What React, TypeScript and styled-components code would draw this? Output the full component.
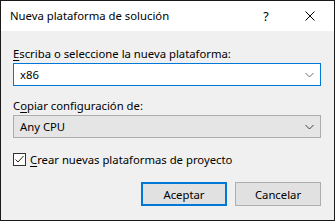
import styled, { createGlobalStyle } from 'styled-components'

const GlobalStyle = createGlobalStyle`
  html, body {
    margin: 0;
    padding: 0;
    background: #ffffff;
  }
  * {
    box-sizing: border-box;
  }
`

const Window = styled.div`
  width: 335px;
  height: 221px;
  border: 1px solid #1a1a1a;
  display: flex;
  flex-direction: column;
  font-family: 'Noto Sans', 'Open Sans', sans-serif;
  font-size: 11.3px;
  color: #000;
  background: #f0f0f0;
`

const TitleBar = styled.div`
  height: 30px;
  background: #ffffff;
  display: flex;
  align-items: center;
  padding-left: 9px;
  padding-right: 2px;
`

const Title = styled.div`
  flex: 1;
  line-height: 16px;
`

const TitleButton = styled.div`
  width: 44px;
  height: 30px;
  display: flex;
  align-items: center;
  justify-content: center;
  font-size: 12.5px;
`

const Body = styled.div`
  flex: 1;
  display: flex;
  flex-direction: column;
  padding: 15px 13px 0 12px;
`

const Label = styled.div<{ $gap?: number }>`
  line-height: 16px;
  height: 16px;
  margin-top: ${(p) => p.$gap ?? 0}px;
  margin-bottom: 1px;
`

const Key = styled.span`
  text-decoration: underline;
  text-underline-offset: 2px;
`

const Combo = styled.div<{ $focused?: boolean }>`
  height: 23px;
  display: flex;
  align-items: center;
  padding: 0 6px 0 6px;
  border: 1px solid ${(p) => (p.$focused ? '#0078d7' : '#adadad')};
  background: ${(p) => (p.$focused ? '#ffffff' : '#e5e5e5')};
`

const ComboText = styled.div`
  flex: 1;
  line-height: 16px;
`

const CheckRow = styled.div`
  margin-top: 13px;
  height: 16px;
  display: flex;
  align-items: center;
  gap: 4px;
`

const Box = styled.div`
  width: 13px;
  height: 13px;
  border: 1px solid #333333;
  background: #ffffff;
  display: flex;
  align-items: center;
  justify-content: center;
`

const Buttons = styled.div`
  margin-top: 15px;
  display: flex;
  justify-content: flex-end;
  gap: 8px;
`

const Button = styled.div<{ $primary?: boolean }>`
  width: 86px;
  height: 24px;
  display: flex;
  align-items: center;
  justify-content: center;
  background: #e1e1e1;
  border: ${(p) => (p.$primary ? '2px solid #0078d7' : '1px solid #adadad')};
`

const Chevron = ({ color }: { color: string }) => (
  <svg width="9" height="6" viewBox="0 0 9 6">
    <polyline points="0.5,1 4.5,5 8.5,1" fill="none" stroke={color} strokeWidth="1" />
  </svg>
)

export default function App() {
  return (
    <>
      <GlobalStyle />
      <Window>
        <TitleBar>
          <Title>Nueva plataforma de solución</Title>
          <TitleButton>?</TitleButton>
          <TitleButton>
            <svg width="10" height="10" viewBox="0 0 10 10">
              <path d="M0.5 0.5 L9.5 9.5 M9.5 0.5 L0.5 9.5" stroke="#000" strokeWidth="1" />
            </svg>
          </TitleButton>
        </TitleBar>
        <Body>
          <Label>
            <Key>E</Key>scriba o seleccione la nueva plataforma:
          </Label>
          <Combo $focused>
            <ComboText>x86</ComboText>
            <Chevron color="#707070" />
          </Combo>
          <Label $gap={12}>
            C<Key>o</Key>piar configuración de:
          </Label>
          <Combo>
            <ComboText>Any CPU</ComboText>
            <Chevron color="#404040" />
          </Combo>
          <CheckRow>
            <Box>
              <svg width="11" height="11" viewBox="0 0 11 11">
                <polyline points="1.5,5.5 4,8 9.5,2" fill="none" stroke="#222" strokeWidth="1" />
              </svg>
            </Box>
            <span>
              <Key>C</Key>rear nuevas plataformas de proyecto
            </span>
          </CheckRow>
          <Buttons>
            <Button $primary>Aceptar</Button>
            <Button>Cancelar</Button>
          </Buttons>
        </Body>
      </Window>
    </>
  )
}
